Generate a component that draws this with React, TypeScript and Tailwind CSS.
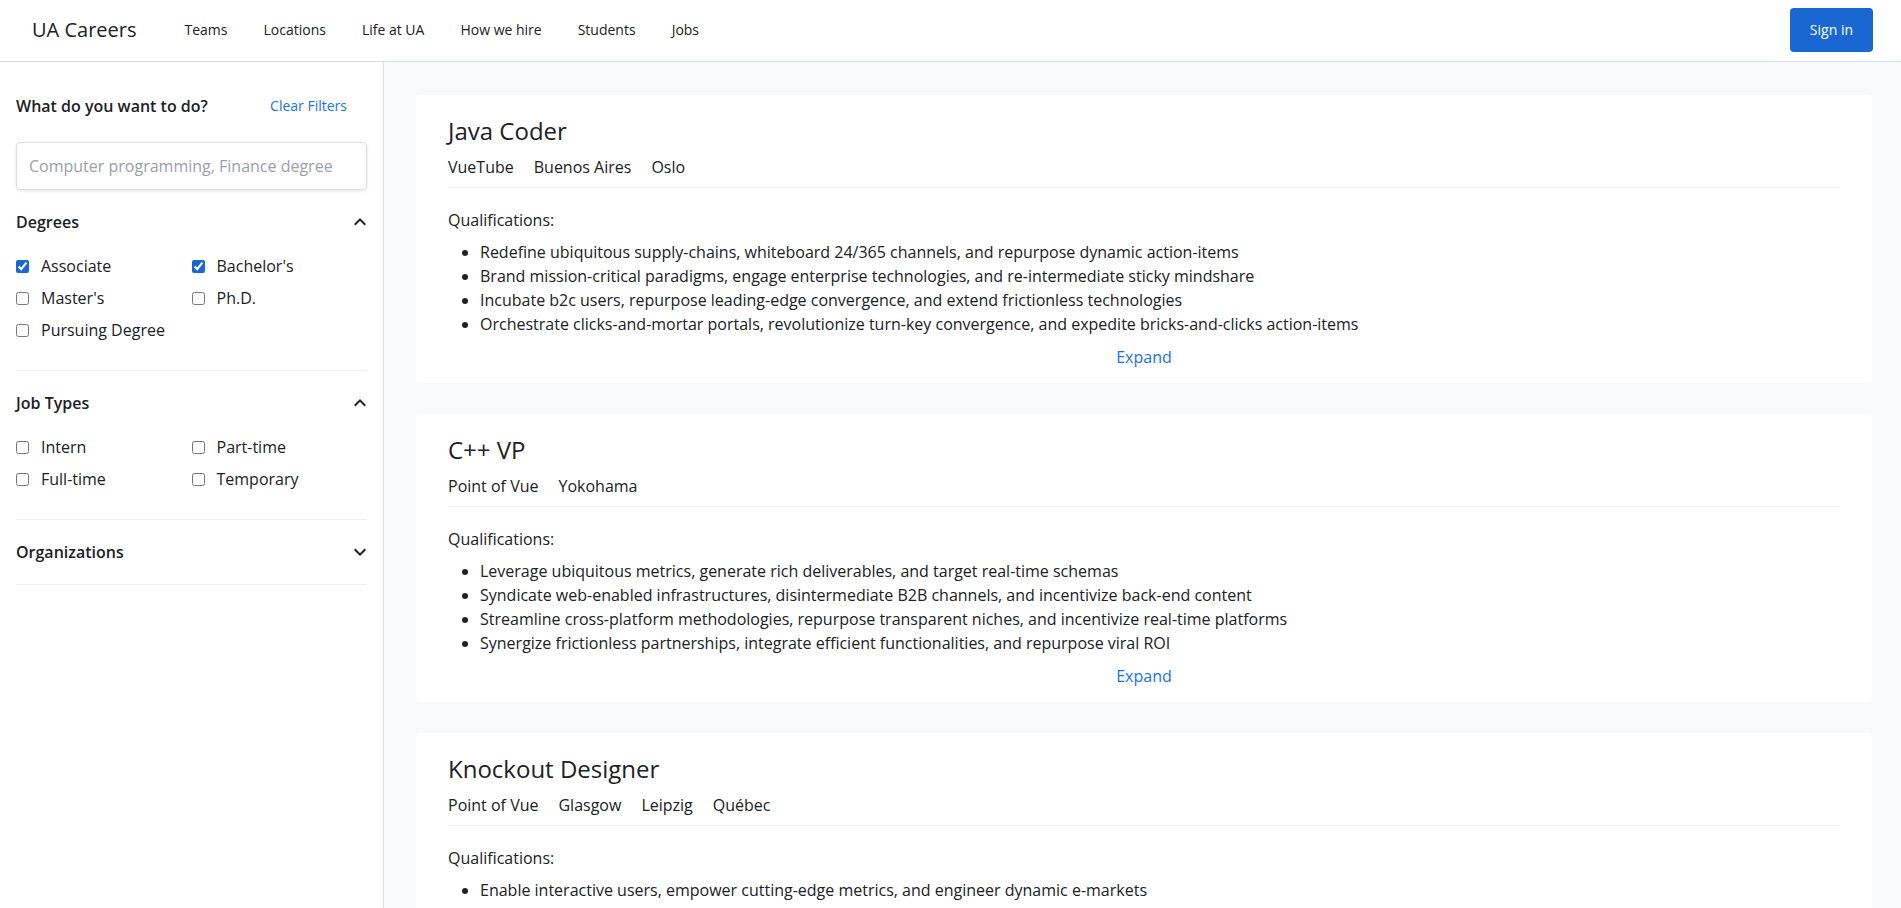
import { useState } from 'react';

// filter groups for the sidebar
const degreeOptions = [
  { id: 'associate', label: 'Associate', checked: true },
  { id: 'bachelors', label: "Bachelor's", checked: true },
  { id: 'masters', label: "Master's", checked: false },
  { id: 'phd', label: 'Ph.D.', checked: false },
  { id: 'pursuing', label: 'Pursuing Degree', checked: false },
];

const jobTypeOptions = [
  { id: 'intern', label: 'Intern', checked: false },
  { id: 'parttime', label: 'Part-time', checked: false },
  { id: 'fulltime', label: 'Full-time', checked: false },
  { id: 'temporary', label: 'Temporary', checked: false },
];

const jobs = [
  {
    id: 1,
    title: 'Java Coder',
    places: ['VueTube', 'Buenos Aires', 'Oslo'],
    qualifications: [
      'Redefine ubiquitous supply-chains, whiteboard 24/365 channels, and repurpose dynamic action-items',
      'Brand mission-critical paradigms, engage enterprise technologies, and re-intermediate sticky mindshare',
      'Incubate b2c users, repurpose leading-edge convergence, and extend frictionless technologies',
      'Orchestrate clicks-and-mortar portals, revolutionize turn-key convergence, and expedite bricks-and-clicks action-items',
    ],
  },
  {
    id: 2,
    title: 'C++ VP',
    places: ['Point of Vue', 'Yokohama'],
    qualifications: [
      'Leverage ubiquitous metrics, generate rich deliverables, and target real-time schemas',
      'Syndicate web-enabled infrastructures, disintermediate B2B channels, and incentivize back-end content',
      'Streamline cross-platform methodologies, repurpose transparent niches, and incentivize real-time platforms',
      'Synergize frictionless partnerships, integrate efficient functionalities, and repurpose viral ROI',
    ],
  },
  {
    id: 3,
    title: 'Knockout Designer',
    places: ['Point of Vue', 'Glasgow', 'Leipzig', 'Québec'],
    qualifications: [
      'Enable interactive users, empower cutting-edge metrics, and engineer dynamic e-markets',
      'Architect next-generation web services, incubate scalable e-business, and synergize B2C metrics',
      'Deploy holistic niches, transform seamless platforms, and monetize back-end supply-chains',
      'Envisioneer robust markets, harness granular portals, and reinvent enterprise e-services',
    ],
  },
];

const navLinks = ['Teams', 'Locations', 'Life at UA', 'How we hire', 'Students', 'Jobs'];

function Chevron({ up }: { up: boolean }) {
  return (
    <svg width="24" height="24" viewBox="0 0 24 24" className="-mr-[5px] fill-[#202124]">
      {up ? (
        <path d="M12 8l-6 6 1.41 1.41L12 10.83l4.59 4.58L18 14z" />
      ) : (
        <path d="M16.59 8.59L12 13.17 7.41 8.59 6 10l6 6 6-6z" />
      )}
    </svg>
  );
}

function FilterSection({
  title,
  options,
  open,
  divider = true,
}: {
  title: string;
  options: { id: string; label: string; checked: boolean }[];
  open: boolean;
  divider?: boolean;
}) {
  const [isOpen, setIsOpen] = useState(open);
  const [state, setState] = useState(options);

  return (
    <div className={`pt-5 pb-5 ${divider ? 'border-b border-[#eeeeee]' : ''}`}>
      <button
        onClick={() => setIsOpen((v) => !v)}
        className="w-full flex items-center justify-between h-6 text-base font-semibold text-[#202124]"
      >
        <span>{title}</span>
        <Chevron up={isOpen} />
      </button>
      {isOpen && (
        <div className="grid grid-cols-2 mt-4 mb-1">
          {state.map((opt, i) => (
            <label key={opt.id} className="flex items-center h-8 gap-3 text-base text-[#202124] cursor-pointer">
              <input
                type="checkbox"
                checked={opt.checked}
                onChange={() =>
                  setState((s) => s.map((o, j) => (j === i ? { ...o, checked: !o.checked } : o)))
                }
                className="w-[13px] h-[13px] m-0 accent-[#1967d2]"
              />
              <span>{opt.label}</span>
            </label>
          ))}
        </div>
      )}
    </div>
  );
}

function JobCard({ job }: { job: (typeof jobs)[number] }) {
  return (
    <div className="bg-white rounded pl-8 pr-8 pt-5 pb-[14px] shrink-0">
      <h2 className="text-2xl leading-8 text-[#202124]">{job.title}</h2>
      <div className="flex gap-5 mt-2 pb-[8px] border-b border-[#f1f3f4] text-base leading-6 text-[#202124]">
        {job.places.map((p) => (
          <span key={p}>{p}</span>
        ))}
      </div>
      <p className="mt-5 text-base leading-6 text-[#202124]">Qualifications:</p>
      <ul className="mt-2 pl-8 list-disc text-base leading-6 text-[#202124]">
        {job.qualifications.map((q) => (
          <li key={q}>{q}</li>
        ))}
      </ul>
      <div className="mt-[9px] text-center">
        <button className="text-base leading-6 text-[#1a73e8]">Expand</button>
      </div>
    </div>
  );
}

export default function App() {
  return (
    <div
      className="h-screen flex flex-col bg-white overflow-hidden"
      style={{ fontFamily: '"Open Sans", "Noto Sans", sans-serif' }}
    >
      {/* top bar */}
      <header className="h-[62px] shrink-0 flex items-center pl-8 pr-7 pb-px border-b border-[#dadce0]">
        <span className="text-xl text-[#202124]">UA Careers</span>
        <nav className="flex items-center gap-9 ml-[48px]">
          {navLinks.map((l) => (
            <a key={l} className="text-sm text-[#202124] cursor-pointer">
              {l}
            </a>
          ))}
        </nav>
        <button className="ml-auto h-11 px-5 rounded bg-[#1967d2] text-white text-sm">Sign in</button>
      </header>

      <div className="flex flex-1 min-h-0">
        {/* filters */}
        <aside className="w-[384px] shrink-0 border-r border-[#dadce0] px-4 pt-[32px]">
          <div className="flex items-center justify-between h-6 pr-5">
            <h2 className="text-base font-semibold text-[#202124]">What do you want to do?</h2>
            <button className="text-sm text-[#1a73e8]">Clear Filters</button>
          </div>
          <input
            type="text"
            placeholder="Computer programming, Finance degree"
            className="mt-[24px] w-full h-12 px-3 rounded border border-[#dadce0] shadow-[0_1px_3px_rgba(60,64,67,0.15)] text-base text-[#202124] placeholder:text-[#9aa0a6] outline-none"
          />
          <FilterSection title="Degrees" options={degreeOptions} open />
          <FilterSection title="Job Types" options={jobTypeOptions} open />
          <FilterSection title="Organizations" options={[]} open={false} />
        </aside>

        {/* job list */}
        <main className="flex-1 bg-[#f8f9fa] pl-8 pr-[29px] pt-[33px] overflow-hidden flex flex-col gap-[31px]">
          {jobs.map((job) => (
            <JobCard key={job.id} job={job} />
          ))}
        </main>
      </div>
    </div>
  );
}
